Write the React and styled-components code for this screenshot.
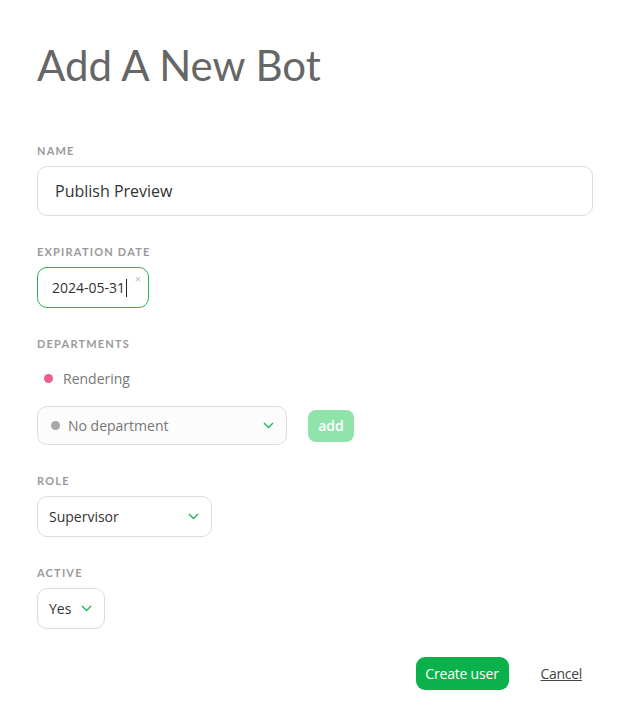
import React from "react";
import styled, { createGlobalStyle } from "styled-components";

const GlobalStyle = createGlobalStyle`
  body {
    margin: 0;
    background: #ffffff;
    font-family: "Open Sans", "Noto Sans", sans-serif;
  }
`;

const Page = styled.div`
  padding: 37px 39px 30px 37px;
  display: flex;
  flex-direction: column;
`;

const Title = styled.h1`
  font-family: Lato, sans-serif;
  font-weight: 400;
  font-size: 42px;
  line-height: 56px;
  color: #666666;
  margin: 0 0 51px;
`;

const Field = styled.div`
  display: flex;
  flex-direction: column;
  margin-bottom: ${({ $gap }) => $gap || 29}px;
`;

const Label = styled.label`
  font-family: Lato, sans-serif;
  font-weight: 700;
  font-size: 11px;
  letter-spacing: 1.2px;
  text-transform: uppercase;
  color: #9a9a9a;
  line-height: 14px;
  margin-bottom: 8px;
`;

const TextInput = styled.div`
  height: 50px;
  box-sizing: border-box;
  border: 1px solid #dcdcdc;
  border-radius: 10px;
  padding: 0 17px;
  display: flex;
  align-items: center;
  font-size: 16px;
  color: #333333;
`;

const DateInput = styled.div`
  position: relative;
  width: 112px;
  height: 41px;
  box-sizing: border-box;
  border: 1px solid #1db954;
  border-radius: 10px;
  padding: 0 14px;
  display: flex;
  align-items: center;
  font-size: 14px;
  color: #333333;
`;

const Caret = styled.span`
  display: inline-block;
  width: 1px;
  height: 18px;
  background: #222;
  margin-left: 1px;
`;

const Clear = styled.span`
  position: absolute;
  right: 7px;
  top: 3px;
  font-size: 11px;
  color: #bbbbbb;
`;

const Tag = styled.div`
  display: flex;
  align-items: center;
  gap: 10px;
  padding: 10px 0 18px 7px;
  font-size: 14px;
  color: #777777;
`;

const Dot = styled.span`
  width: 9px;
  height: 9px;
  border-radius: 50%;
  background: ${({ $color }) => $color};
  flex-shrink: 0;
`;

const Row = styled.div`
  display: flex;
  align-items: center;
  gap: 21px;
`;

const Select = styled.div`
  width: ${({ $w }) => $w}px;
  height: ${({ $h }) => $h || 41}px;
  box-sizing: border-box;
  border: 1px solid #dcdcdc;
  border-radius: 10px;
  background: ${({ $bg }) => $bg || "#ffffff"};
  padding: 0 12px 0 ${({ $pl }) => $pl || 11}px;
  display: flex;
  align-items: center;
  gap: 8px;
  font-size: 14px;
  color: ${({ $muted }) => ($muted ? "#777777" : "#333333")};
`;

const SelectText = styled.span`
  flex: 1;
`;

const AddButton = styled.button`
  border: none;
  background: #90e4ab;
  color: #ffffff;
  font-family: "Open Sans", sans-serif;
  font-weight: 600;
  font-size: 14px;
  border-radius: 8px;
  width: 46px;
  height: 32px;
  padding: 0;
`;

const Footer = styled.div`
  display: flex;
  justify-content: flex-end;
  align-items: center;
  gap: 32px;
  padding-right: 11px;
`;

const PrimaryButton = styled.button`
  border: none;
  background: #0bb24b;
  color: #ffffff;
  font-family: "Open Sans", sans-serif;
  font-size: 14px;
  border-radius: 9px;
  height: 33px;
  width: 93px;
  padding: 0;
  letter-spacing: -0.2px;
`;

const LinkButton = styled.a`
  font-size: 14px;
  color: #444444;
  text-decoration: underline;
  letter-spacing: -0.3px;
`;

function Chevron() {
  return (
    <svg width="11" height="7" viewBox="0 0 11 7" fill="none">
      <path d="M1 1l4.5 4.5L10 1" stroke="#1db954" strokeWidth="1.4" />
    </svg>
  );
}

export default function App() {
  return (
    <>
      <GlobalStyle />
      <Page>
        <Title>Add A New Bot</Title>

        <Field>
          <Label>Name</Label>
          <TextInput>Publish Preview</TextInput>
        </Field>

        <Field>
          <Label>Expiration date</Label>
          <DateInput>
            2024-05-31
            <Caret />
            <Clear>×</Clear>
          </DateInput>
        </Field>

        <Field>
          <Label>Departments</Label>
          <Tag>
            <Dot $color="#ec5f8c" />
            Rendering
          </Tag>
          <Row>
            <Select $w={250} $h={39} $bg="#fcfcfc" $pl={13} $muted>
              <Dot $color="#a8a8a8" />
              <SelectText>No department</SelectText>
              <Chevron />
            </Select>
            <AddButton>add</AddButton>
          </Row>
        </Field>

        <Field>
          <Label>Role</Label>
          <Select $w={175}>
            <SelectText>Supervisor</SelectText>
            <Chevron />
          </Select>
        </Field>

        <Field $gap={28}>
          <Label>Active</Label>
          <Select $w={68}>
            <SelectText>Yes</SelectText>
            <Chevron />
          </Select>
        </Field>

        <Footer>
          <PrimaryButton>Create user</PrimaryButton>
          <LinkButton>Cancel</LinkButton>
        </Footer>
      </Page>
    </>
  );
}
